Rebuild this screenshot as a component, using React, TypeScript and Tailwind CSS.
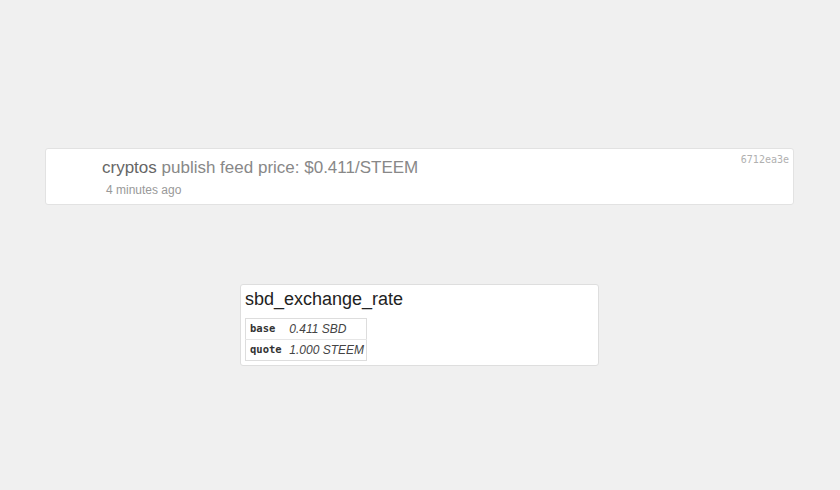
export default function App() {
  return (
    <div className="w-[840px] h-[490px] bg-[#f0f0f0] pt-[148px] pl-[45px] overflow-hidden" style={{ fontFamily: '"Liberation Sans", Arial, sans-serif' }}>
      <div className="relative w-[749px] h-[57px] bg-white border border-[#e2e2e2] rounded-[3px] pl-[56px] pt-[8px]">
        <div className="text-[17px] leading-[21px] text-[#888]">
          <span className="text-[#666]">cryptos</span> publish feed price: $0.411/STEEM
        </div>
        <div className="text-[12px] leading-[16px] text-[#999] pl-[4px] mt-[4px]">4 minutes ago</div>
        <div className="absolute right-[4px] top-[5px] text-[10px] leading-[12px] text-[#b0b0b0]" style={{ fontFamily: '"DejaVu Sans Mono", "Liberation Mono", monospace' }}>6712ea3e</div>
      </div>
      <div className="mt-[79px] ml-[195px] w-[359px] h-[82px] bg-white border border-[#dedede] rounded-[3px] pl-[4px] pt-[3px]">
        <div className="text-[18px] leading-[22px] text-[#222]">sbd_exchange_rate</div>
        <table className="mt-[8px] border border-[#ddd] border-collapse">
          <tbody>
            <tr className="border-b border-[#e6e6e6] h-[21px]">
              <td className="pl-[4px] pr-[14px] text-[10.5px] font-bold text-[#333]" style={{ fontFamily: '"DejaVu Sans Mono", "Liberation Mono", monospace' }}>base</td>
              <td className="pr-[2px] text-[12px] italic text-[#444]">0.411 SBD</td>
            </tr>
            <tr className="h-[21px]">
              <td className="pl-[4px] pr-[7px] text-[10.5px] font-bold text-[#333]" style={{ fontFamily: '"DejaVu Sans Mono", "Liberation Mono", monospace' }}>quote</td>
              <td className="pr-[2px] text-[12px] italic text-[#444]">1.000 STEEM</td>
            </tr>
          </tbody>
        </table>
      </div>
    </div>
  );
}
